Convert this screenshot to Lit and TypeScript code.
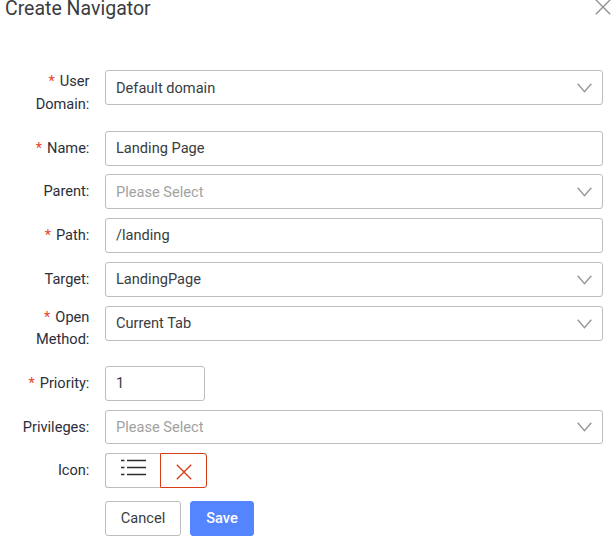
import { LitElement, html, css, svg, nothing } from "lit";
import { customElement } from "lit/decorators.js";
import { classMap } from "lit/directives/class-map.js";

interface Field {
  label: string[];
  kind: "select" | "input" | "number";
  value?: string;
  required?: boolean;
  size?: string;
}

const FIELDS: Field[] = [
  { label: ["User", "Domain:"], kind: "select", value: "Default domain", required: true, size: "double" },
  { label: ["Name:"], kind: "input", value: "Landing Page", required: true, size: "tight" },
  { label: ["Parent:"], kind: "select", size: "nudge" },
  { label: ["Path:"], kind: "input", value: "/landing", required: true },
  { label: ["Target:"], kind: "select", value: "LandingPage" },
  { label: ["Open", "Method:"], kind: "select", value: "Current Tab", required: true, size: "double-short" },
  { label: ["Priority:"], kind: "number", value: "1", required: true },
  { label: ["Privileges:"], kind: "select", size: "low" },
];

const cross = (size: number) => html`<svg class="cross" width=${size} height=${size} viewBox="0 0 16 16">
  ${svg`<path d="M.8 .8 15.2 15.2M15.2 .8 .8 15.2" />`}
</svg>`;

@customElement("app-root")
export class AppRoot extends LitElement {
  static styles = css`
    :host {
      display: block;
      height: 545px;
      overflow: hidden;
      background: #fff;
      color: #3a3c40;
      font: 14.6px/22.5px Roboto, "Liberation Sans", sans-serif;
    }
    * { box-sizing: border-box; }
    svg { display: block; fill: none; }
    .header {
      display: flex;
      justify-content: space-between;
      height: 70px;
      padding: 0 5px;
    }
    .title {
      margin: 0;
      font-size: 19.5px;
      line-height: 18px;
      font-weight: 400;
    }
    .close { color: #8f8f8f; margin-top: -1px; height: 16px; }
    .cross { stroke: currentColor; stroke-width: 1.35; }
    .row {
      display: grid;
      grid-template-columns: 90px 498px;
      column-gap: 15px;
      align-items: start;
      height: 44px;
    }
    .row.double { height: 61px; }
    .row.double-short { height: 60px; }
    .row.tight, .row.low { height: 43px; }
    .label { padding: 6px .6px 0 0; text-align: right; color: #2b2f3b; }
    .tight .label { padding-top: 5.5px; }
    .double .label, .double-short .label { padding-top: 0; }
    .double-short .label { line-height: 22px; }
    .line { display: block; white-space: nowrap; }
    .star { color: #e8452c; margin-right: 5px; }
    .box {
      display: flex;
      align-items: center;
      justify-content: space-between;
      height: 35px;
      padding: 0 10px;
      border: 1px solid #bdbdbd;
      border-radius: 3px;
    }
    .double .text, .nudge .text { padding-top: 2px; }
    .low .box { height: 34px; }
    .box.number { width: 100px; }
    .box.placeholder { color: #a2a2a2; }
    .chevron { stroke: #999; stroke-width: 1.5; }
    .icons { display: flex; height: 35px; }
    .pick, .clear {
      display: flex;
      justify-content: center;
      border: 1px solid #bdbdbd;
    }
    .pick {
      width: 55px;
      padding: 5px 0 0 1px;
      border-right: 0;
      border-radius: 3px 0 0 3px;
    }
    .clear {
      width: 47px;
      align-items: center;
      padding: 2px 0 0 1px;
      color: #d83b16;
      border-color: #d83b16;
      border-radius: 0 3px 3px 0;
    }
    .list { stroke: #2d2d2d; stroke-width: 1.3; }
    .actions { display: flex; gap: 9px; padding: 4px 0 0 105px; }
    .btn {
      height: 35px;
      width: 76px;
      padding: 0;
      border: 1px solid #bdbdbd;
      border-radius: 3px;
      background: #fff;
      color: inherit;
      font: inherit;
    }
    .btn.primary {
      width: 64px;
      background: #5584ff;
      border-color: #5584ff;
      color: #fff;
      font-weight: 500;
    }
  `;

  private renderField(f: Field) {
    const cls = { box: true, number: f.kind === "number", placeholder: !f.value };
    return html`<div class="row ${f.size ?? ""}">
      <div class="label">
        ${f.label.map(
          (text, i) => html`<span class="line">${f.required && i === 0 ? html`<span class="star">*</span>` : nothing}${text}</span>`,
        )}
      </div>
      <div class=${classMap(cls)}>
        <span class="text">${f.value ?? "Please Select"}</span>
        ${f.kind === "select"
          ? html`<svg class="chevron" width="15" height="10" viewBox="0 0 15 10"><path d="M.7 .7 7.5 8.7 14.3 .7" /></svg>`
          : nothing}
      </div>
    </div>`;
  }

  render() {
    return html`
      <div class="header">
        <h1 class="title">Create Navigator</h1>
        <div class="close">${cross(16)}</div>
      </div>
      ${FIELDS.map((f) => this.renderField(f))}
      <div class="row">
        <div class="label">Icon:</div>
        <div class="icons">
          <div class="pick">
            <svg class="list" width="25" height="18" viewBox="0 0 25 18">
              <path d="M0 1.5h3.5M6 1.5h19M0 8.5h3.5M6 8.5h19M0 15.5h3.5M6 15.5h19" />
            </svg>
          </div>
          <div class="clear">${cross(16)}</div>
        </div>
      </div>
      <div class="actions">
        <button class="btn">Cancel</button>
        <button class="btn primary">Save</button>
      </div>
    `;
  }
}
